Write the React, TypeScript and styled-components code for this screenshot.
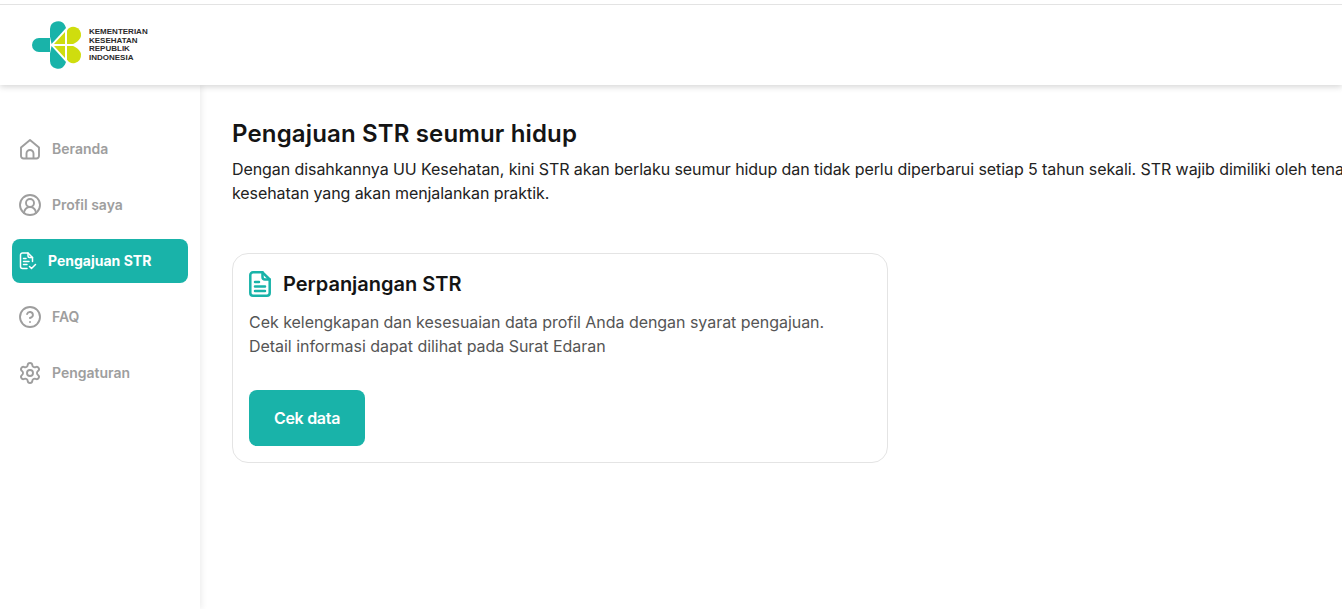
import React from "react"
import styled, { createGlobalStyle } from "styled-components"
import { CircleHelp, CircleUserRound, Settings } from "lucide-react"

const GlobalStyle = createGlobalStyle`
  html, body {
    background: #fff;
    height: 100%;
    margin: 0;
    overflow: hidden;
  }
  * {
    box-sizing: border-box;
  }
`

const HomeIcon = ({ size = 24, strokeWidth = 2 }: { size?: number; strokeWidth?: number }) => (
  <svg width={size} height={size} viewBox="0 0 24 24" fill="none" stroke="currentColor" strokeWidth={strokeWidth} strokeLinejoin="round" aria-hidden="true">
    <path d="M3 10.500 L12 3 L21 10.500 V19 a2.500 2.500 0 0 1 -2.500 2.500 H5.500 a2.500 2.500 0 0 1 -2.500 -2.500 Z" />
    <path d="M8.500 21.500 V16.500 a3.500 3.500 0 0 1 7 0 V21.500" />
  </svg>
)

const SubmitIcon = ({ size = 18, strokeWidth = 1.5 }: { size?: number; strokeWidth?: number }) => (
  <svg width={size} height={size} viewBox="0 0 18 18" fill="none" stroke="currentColor" strokeWidth={strokeWidth} strokeLinecap="round" strokeLinejoin="round" aria-hidden="true">
    <path d="M8 16.500 H3.500 a2 2 0 0 1 -2 -2 V3 a2 2 0 0 1 2 -2 H9 L13.500 5.500 V9.500" />
    <path d="M9 1 V4 a1.500 1.500 0 0 0 1.500 1.500 H13.500" />
    <path d="M4.500 6.500 H7 M4.500 9.500 H10 M4.500 12.500 H8" />
    <path d="M10.500 14.500 L12.500 16.500 L16.500 12.500" />
  </svg>
)

const MENU = [
  { label: "Beranda", Icon: HomeIcon },
  { label: "Profil saya", Icon: CircleUserRound },
  { label: "Pengajuan STR", Icon: SubmitIcon, active: true },
  { label: "FAQ", Icon: CircleHelp },
  { label: "Pengaturan", Icon: Settings },
]

const Logo = () => (
  <svg width="50" height="48" viewBox="0 0 50 48" aria-hidden="true">
    <path d="M18 17 H7 A7 7 0 0 0 7 31 H18 Z" fill="#19b3a9" />
    <path d="M18 15.500 V8 A8 8 0 0 1 33 4.500 L34 7 L19.500 23 Z" fill="#19b3a9" />
    <path d="M19.500 25 L34 41 L33 43.500 A8 8 0 0 1 18 40 V32.500 Z" fill="#19b3a9" />
    <path d="M22 23 L33 11 V23 Z" fill="#cfdd0e" />
    <path d="M35 9.500 A7.500 7.500 0 0 1 43 6 A8.800 8.800 0 0 1 49 15 C48.500 18.500 44 22 41 23 H35 Z" fill="#cfdd0e" />
    <path d="M22 25 H33 V37 Z" fill="#cfdd0e" />
    <path d="M35 25 H41 C44 26 48.500 29.500 49 33 A8.800 8.800 0 0 1 43 42 A7.500 7.500 0 0 1 35 38.500 Z" fill="#cfdd0e" />
  </svg>
)

const DocumentIcon = () => (
  <svg width="22" height="26" viewBox="0 0 22 26" fill="none" stroke="#19b3a9" strokeWidth="2.500" strokeLinecap="round" strokeLinejoin="round" aria-hidden="true">
    <path d="M4 1.300 H13.500 L20.700 8.500 V22 a2.700 2.700 0 0 1 -2.700 2.700 H4 a2.700 2.700 0 0 1 -2.700 -2.700 V4 a2.700 2.700 0 0 1 2.700 -2.700 Z" />
    <path d="M13.500 1.300 V6 a2.500 2.500 0 0 0 2.500 2.500 H20.700" />
    <path d="M6 11 H10 M6 15.500 H16 M6 20 H16" />
  </svg>
)

export default function App() {
  return (
    <>
      <GlobalStyle />
      <Page>
        <Header>
          <Brand>
            <Logo />
            <BrandText>
              KEMENTERIAN
              <br />
              KESEHATAN
              <br />
              REPUBLIK
              <br />
              INDONESIA
            </BrandText>
          </Brand>
        </Header>
        <Body>
          <Sidebar>
            {MENU.map(({ label, Icon, active }) => (
              <MenuItem key={label} $active={!!active}>
                <Icon size={active ? 18 : 24} strokeWidth={active ? 1.5 : 1.9} />
                <MenuLabel $active={!!active}>{label}</MenuLabel>
              </MenuItem>
            ))}
          </Sidebar>
          <Main>
            <Title>Pengajuan STR seumur hidup</Title>
            <Intro>
              Dengan disahkannya UU Kesehatan, kini STR akan berlaku seumur hidup dan tidak perlu diperbarui setiap 5
              tahun sekali. STR wajib dimiliki oleh tenaga
              <br />
              kesehatan yang akan menjalankan praktik.
            </Intro>
            <Card>
              <CardHead>
                <DocumentIcon />
                <CardTitle>Perpanjangan STR</CardTitle>
              </CardHead>
              <CardText>
                Cek kelengkapan dan kesesuaian data profil Anda dengan syarat pengajuan.
                <br />
                Detail informasi dapat dilihat pada Surat Edaran
              </CardText>
              <CheckButton type="button">Cek data</CheckButton>
            </Card>
          </Main>
        </Body>
      </Page>
    </>
  )
}

const Page = styled.div`
  background: #fff;
  border-top: 1px solid #e3e3e3;
  display: flex;
  flex-direction: column;
  font-family: Inter, "Noto Sans", sans-serif;
  height: 605px;
  margin-top: 4px;
  overflow: hidden;
  width: 1342px;
`
const Header = styled.header`
  align-items: center;
  background: #fff;
  box-shadow: 0 2px 6px rgba(0, 0, 0, 0.16);
  display: flex;
  flex: 0 0 80px;
  padding-left: 32px;
  position: relative;
  z-index: 2;
`
const Brand = styled.div`
  align-items: center;
  display: flex;
  gap: 7px;
`
const BrandText = styled.div`
  color: #2b2b2b;
  font-family: "Liberation Sans", Arial, sans-serif;
  font-size: 8px;
  font-weight: 700;
  line-height: 8.500px;
`
const Body = styled.div`
  display: flex;
  flex: 1;
`
const Sidebar = styled.nav`
  box-shadow: 2px 0 6px rgba(0, 0, 0, 0.07);
  display: flex;
  flex: 0 0 200px;
  flex-direction: column;
  gap: 12px;
  padding: 42px 12px 0;
`
const MenuItem = styled.a<{ $active: boolean }>`
  align-items: center;
  background: ${(p) => (p.$active ? "#19b3a9" : "transparent")};
  border-radius: 8px;
  color: ${(p) => (p.$active ? "#fff" : "#9e9e9e")};
  display: flex;
  gap: ${(p) => (p.$active ? "11px" : "10px")};
  height: 44px;
  padding-left: ${(p) => (p.$active ? "7px" : "6px")};
  width: 176px;
`
const MenuLabel = styled.span<{ $active: boolean }>`
  font-size: 14px;
  font-weight: ${(p) => (p.$active ? 700 : 600)};
  padding-bottom: 2px;
`
const Main = styled.main`
  flex: 1;
  min-width: 0;
  padding: 34px 0 0 32px;
`
const Title = styled.h1`
  color: #141414;
  font-size: 24px;
  font-weight: 600;
  letter-spacing: 0.15px;
  line-height: 30px;
  margin: 0;
`
const Intro = styled.p`
  color: #222;
  font-size: 16px;
  font-weight: 400;
  letter-spacing: -0.08px;
  line-height: 24px;
  margin: 8px 0 0;
  white-space: nowrap;
`
const Card = styled.section`
  border: 1px solid #e4e4e4;
  border-radius: 16px;
  height: 210px;
  margin-top: 48px;
  padding: 16px;
  width: 656px;
`
const CardHead = styled.div`
  align-items: center;
  display: flex;
  gap: 12px;
  height: 28px;
`
const CardTitle = styled.h2`
  color: #141414;
  font-size: 20px;
  font-weight: 600;
  margin: 0;
`
const CardText = styled.p`
  color: #555;
  font-size: 16px;
  letter-spacing: -0.04px;
  line-height: 24px;
  margin: 12px 0 0;
`
const CheckButton = styled.button`
  background: #19b3a9;
  border: 0;
  border-radius: 8px;
  color: #fff;
  display: block;
  font-family: inherit;
  font-size: 16px;
  font-weight: 600;
  height: 56px;
  letter-spacing: -0.3px;
  margin-top: 32px;
  width: 116px;
`
